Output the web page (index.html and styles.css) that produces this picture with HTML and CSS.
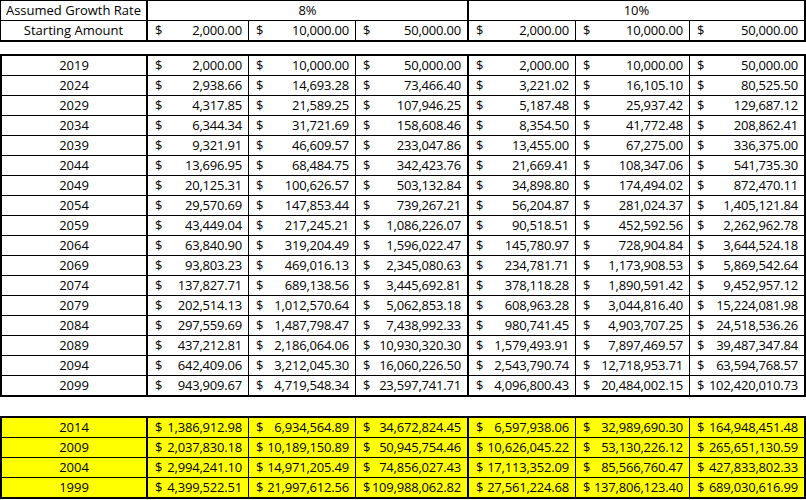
FILE: index.html
```html
<!DOCTYPE html>
<html>
<head>
<meta charset="utf-8">
<link rel="stylesheet" href="styles.css">
</head>
<body>
<div class="sheet">
  <div class="block block-head">
    <div class="row">
      <div class="cell label thick">Assumed Growth Rate</div>
      <div class="cell label span3 thick">8%</div>
      <div class="cell label span3 thick">10%</div>
    </div>
    <div class="row last">
      <div class="cell label thick">Starting Amount</div>
      <div class="cell money"><span>$</span><span>2,000.00</span></div>
      <div class="cell money"><span>$</span><span>10,000.00</span></div>
      <div class="cell money thick"><span>$</span><span>50,000.00</span></div>
      <div class="cell money"><span>$</span><span>2,000.00</span></div>
      <div class="cell money"><span>$</span><span>10,000.00</span></div>
      <div class="cell money thick"><span>$</span><span>50,000.00</span></div>
    </div>
  </div>

  <div class="block block-data">
    <div class="row"><div class="cell label thick">2019</div><div class="cell money"><span>$</span><span>2,000.00</span></div><div class="cell money"><span>$</span><span>10,000.00</span></div><div class="cell money thick"><span>$</span><span>50,000.00</span></div><div class="cell money"><span>$</span><span>2,000.00</span></div><div class="cell money"><span>$</span><span>10,000.00</span></div><div class="cell money thick"><span>$</span><span>50,000.00</span></div></div>
    <div class="row"><div class="cell label thick">2024</div><div class="cell money"><span>$</span><span>2,938.66</span></div><div class="cell money"><span>$</span><span>14,693.28</span></div><div class="cell money thick"><span>$</span><span>73,466.40</span></div><div class="cell money"><span>$</span><span>3,221.02</span></div><div class="cell money"><span>$</span><span>16,105.10</span></div><div class="cell money thick"><span>$</span><span>80,525.50</span></div></div>
    <div class="row"><div class="cell label thick">2029</div><div class="cell money"><span>$</span><span>4,317.85</span></div><div class="cell money"><span>$</span><span>21,589.25</span></div><div class="cell money thick"><span>$</span><span>107,946.25</span></div><div class="cell money"><span>$</span><span>5,187.48</span></div><div class="cell money"><span>$</span><span>25,937.42</span></div><div class="cell money thick"><span>$</span><span>129,687.12</span></div></div>
    <div class="row"><div class="cell label thick">2034</div><div class="cell money"><span>$</span><span>6,344.34</span></div><div class="cell money"><span>$</span><span>31,721.69</span></div><div class="cell money thick"><span>$</span><span>158,608.46</span></div><div class="cell money"><span>$</span><span>8,354.50</span></div><div class="cell money"><span>$</span><span>41,772.48</span></div><div class="cell money thick"><span>$</span><span>208,862.41</span></div></div>
    <div class="row"><div class="cell label thick">2039</div><div class="cell money"><span>$</span><span>9,321.91</span></div><div class="cell money"><span>$</span><span>46,609.57</span></div><div class="cell money thick"><span>$</span><span>233,047.86</span></div><div class="cell money"><span>$</span><span>13,455.00</span></div><div class="cell money"><span>$</span><span>67,275.00</span></div><div class="cell money thick"><span>$</span><span>336,375.00</span></div></div>
    <div class="row"><div class="cell label thick">2044</div><div class="cell money"><span>$</span><span>13,696.95</span></div><div class="cell money"><span>$</span><span>68,484.75</span></div><div class="cell money thick"><span>$</span><span>342,423.76</span></div><div class="cell money"><span>$</span><span>21,669.41</span></div><div class="cell money"><span>$</span><span>108,347.06</span></div><div class="cell money thick"><span>$</span><span>541,735.30</span></div></div>
    <div class="row"><div class="cell label thick">2049</div><div class="cell money"><span>$</span><span>20,125.31</span></div><div class="cell money"><span>$</span><span>100,626.57</span></div><div class="cell money thick"><span>$</span><span>503,132.84</span></div><div class="cell money"><span>$</span><span>34,898.80</span></div><div class="cell money"><span>$</span><span>174,494.02</span></div><div class="cell money thick"><span>$</span><span>872,470.11</span></div></div>
    <div class="row"><div class="cell label thick">2054</div><div class="cell money"><span>$</span><span>29,570.69</span></div><div class="cell money"><span>$</span><span>147,853.44</span></div><div class="cell money thick"><span>$</span><span>739,267.21</span></div><div class="cell money"><span>$</span><span>56,204.87</span></div><div class="cell money"><span>$</span><span>281,024.37</span></div><div class="cell money thick"><span>$</span><span>1,405,121.84</span></div></div>
    <div class="row"><div class="cell label thick">2059</div><div class="cell money"><span>$</span><span>43,449.04</span></div><div class="cell money"><span>$</span><span>217,245.21</span></div><div class="cell money thick"><span>$</span><span>1,086,226.07</span></div><div class="cell money"><span>$</span><span>90,518.51</span></div><div class="cell money"><span>$</span><span>452,592.56</span></div><div class="cell money thick"><span>$</span><span>2,262,962.78</span></div></div>
    <div class="row"><div class="cell label thick">2064</div><div class="cell money"><span>$</span><span>63,840.90</span></div><div class="cell money"><span>$</span><span>319,204.49</span></div><div class="cell money thick"><span>$</span><span>1,596,022.47</span></div><div class="cell money"><span>$</span><span>145,780.97</span></div><div class="cell money"><span>$</span><span>728,904.84</span></div><div class="cell money thick"><span>$</span><span>3,644,524.18</span></div></div>
    <div class="row"><div class="cell label thick">2069</div><div class="cell money"><span>$</span><span>93,803.23</span></div><div class="cell money"><span>$</span><span>469,016.13</span></div><div class="cell money thick"><span>$</span><span>2,345,080.63</span></div><div class="cell money"><span>$</span><span>234,781.71</span></div><div class="cell money"><span>$</span><span>1,173,908.53</span></div><div class="cell money thick"><span>$</span><span>5,869,542.64</span></div></div>
    <div class="row"><div class="cell label thick">2074</div><div class="cell money"><span>$</span><span>137,827.71</span></div><div class="cell money"><span>$</span><span>689,138.56</span></div><div class="cell money thick"><span>$</span><span>3,445,692.81</span></div><div class="cell money"><span>$</span><span>378,118.28</span></div><div class="cell money"><span>$</span><span>1,890,591.42</span></div><div class="cell money thick"><span>$</span><span>9,452,957.12</span></div></div>
    <div class="row"><div class="cell label thick">2079</div><div class="cell money"><span>$</span><span>202,514.13</span></div><div class="cell money"><span>$</span><span>1,012,570.64</span></div><div class="cell money thick"><span>$</span><span>5,062,853.18</span></div><div class="cell money"><span>$</span><span>608,963.28</span></div><div class="cell money"><span>$</span><span>3,044,816.40</span></div><div class="cell money thick"><span>$</span><span>15,224,081.98</span></div></div>
    <div class="row"><div class="cell label thick">2084</div><div class="cell money"><span>$</span><span>297,559.69</span></div><div class="cell money"><span>$</span><span>1,487,798.47</span></div><div class="cell money thick"><span>$</span><span>7,438,992.33</span></div><div class="cell money"><span>$</span><span>980,741.45</span></div><div class="cell money"><span>$</span><span>4,903,707.25</span></div><div class="cell money thick"><span>$</span><span>24,518,536.26</span></div></div>
    <div class="row"><div class="cell label thick">2089</div><div class="cell money"><span>$</span><span>437,212.81</span></div><div class="cell money"><span>$</span><span>2,186,064.06</span></div><div class="cell money thick"><span>$</span><span>10,930,320.30</span></div><div class="cell money"><span>$</span><span>1,579,493.91</span></div><div class="cell money"><span>$</span><span>7,897,469.57</span></div><div class="cell money thick"><span>$</span><span>39,487,347.84</span></div></div>
    <div class="row"><div class="cell label thick">2094</div><div class="cell money"><span>$</span><span>642,409.06</span></div><div class="cell money"><span>$</span><span>3,212,045.30</span></div><div class="cell money thick"><span>$</span><span>16,060,226.50</span></div><div class="cell money"><span>$</span><span>2,543,790.74</span></div><div class="cell money"><span>$</span><span>12,718,953.71</span></div><div class="cell money thick"><span>$</span><span>63,594,768.57</span></div></div>
    <div class="row last"><div class="cell label thick">2099</div><div class="cell money"><span>$</span><span>943,909.67</span></div><div class="cell money"><span>$</span><span>4,719,548.34</span></div><div class="cell money thick"><span>$</span><span>23,597,741.71</span></div><div class="cell money"><span>$</span><span>4,096,800.43</span></div><div class="cell money"><span>$</span><span>20,484,002.15</span></div><div class="cell money thick"><span>$</span><span>102,420,010.73</span></div></div>
  </div>

  <div class="block block-yellow">
    <div class="row"><div class="cell label thick">2014</div><div class="cell money"><span>$</span><span>1,386,912.98</span></div><div class="cell money"><span>$</span><span>6,934,564.89</span></div><div class="cell money thick"><span>$</span><span>34,672,824.45</span></div><div class="cell money"><span>$</span><span>6,597,938.06</span></div><div class="cell money"><span>$</span><span>32,989,690.30</span></div><div class="cell money thick"><span>$</span><span>164,948,451.48</span></div></div>
    <div class="row"><div class="cell label thick">2009</div><div class="cell money"><span>$</span><span>2,037,830.18</span></div><div class="cell money"><span>$</span><span>10,189,150.89</span></div><div class="cell money thick"><span>$</span><span>50,945,754.46</span></div><div class="cell money"><span>$</span><span>10,626,045.22</span></div><div class="cell money"><span>$</span><span>53,130,226.12</span></div><div class="cell money thick"><span>$</span><span>265,651,130.59</span></div></div>
    <div class="row"><div class="cell label thick">2004</div><div class="cell money"><span>$</span><span>2,994,241.10</span></div><div class="cell money"><span>$</span><span>14,971,205.49</span></div><div class="cell money thick"><span>$</span><span>74,856,027.43</span></div><div class="cell money"><span>$</span><span>17,113,352.09</span></div><div class="cell money"><span>$</span><span>85,566,760.47</span></div><div class="cell money thick"><span>$</span><span>427,833,802.33</span></div></div>
    <div class="row last"><div class="cell label thick">1999</div><div class="cell money"><span>$</span><span>4,399,522.51</span></div><div class="cell money"><span>$</span><span>21,997,612.56</span></div><div class="cell money thick"><span>$</span><span>109,988,062.82</span></div><div class="cell money"><span>$</span><span>27,561,224.68</span></div><div class="cell money"><span>$</span><span>137,806,123.40</span></div><div class="cell money thick"><span>$</span><span>689,030,616.99</span></div></div>
  </div>
</div>
</body>
</html>
```

FILE: styles.css
```css
html, body {
  margin: 0;
  padding: 0;
  background: #ffffff;
}

body {
  font-family: "Open Sans", "Liberation Sans", sans-serif;
  font-size: 13px;
  color: #000000;
}

.sheet {
  width: 806px;
}

.block {
  border-left: 2px solid #000;
  border-top: 2px solid #000;
}

.block-head {
  border-left-width: 1px;
  border-top-width: 1px;
}

.block-data {
  margin-top: 12px;
}

.block-yellow {
  margin-top: 19px;
}

.row {
  display: grid;
  grid-template-columns: 146px 101px 107px 113px 107px 114px 116px;
  height: 20px;
}

.block-head .row {
  grid-template-columns: 147px 101px 107px 113px 107px 114px 116px;
}

.row.last {
  height: 21px;
}

.cell {
  box-sizing: border-box;
  border-right: 1px solid #000;
  border-bottom: 1px solid #000;
  line-height: 19px;
  white-space: nowrap;
  overflow: hidden;
}

.cell.thick {
  border-right-width: 2px;
}

.row.last .cell {
  border-bottom-width: 2px;
}

.span3 {
  grid-column: span 3;
}

.label {
  text-align: center;
}

.money {
  display: flex;
  justify-content: space-between;
  padding: 0 6px 0 7px;
  letter-spacing: -0.2px;
}

.block-yellow .cell {
  background: #ffff00;
}
```
